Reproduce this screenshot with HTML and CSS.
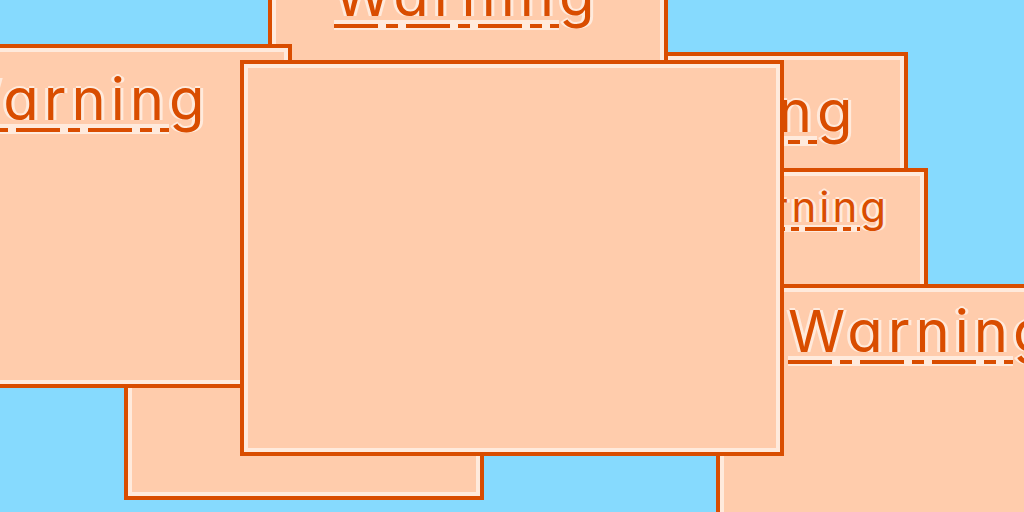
FILE: index.html
```html
<!DOCTYPE html>
<html lang="en">
<head>
<meta charset="utf-8">
<title>Warning</title>
<link rel="stylesheet" href="styles.css">
</head>
<body>
<div class="desk">
  <div class="win w-bottom"></div>
  <div class="win w-rt"><div class="title"><span class="ul">Warnin</span>g</div></div>
  <div class="win w-rm"><div class="title small"><span class="ul">Warnin</span>g</div></div>
  <div class="win w-br"><div class="title"><span class="ul">Warnin</span>g</div></div>
  <div class="win w-top"><div class="title"><span class="ul">Warnin</span>g</div></div>
  <div class="win w-left"><div class="title"><span class="ul">Warnin</span>g</div></div>
  <div class="win w-center"></div>
</div>
</body>
</html>
```
FILE: styles.css
```css
html, body {
  margin: 0;
  padding: 0;
}
body {
  width: 1024px;
  height: 512px;
  overflow: hidden;
  background: #86dafe;
  font-family: Inter, "DejaVu Sans", sans-serif;
}
.desk {
  position: relative;
  width: 1024px;
  height: 512px;
  overflow: hidden;
}
.win {
  position: absolute;
  box-sizing: border-box;
  background: #ffccac;
  border: 4px solid #d94d00;
  box-shadow: inset 0 0 0 4px #ffeadc;
}
.title {
  font-size: 58px;
  line-height: 1;
  font-weight: 400;
  letter-spacing: 5px;
  color: #d94d00;
  white-space: nowrap;
  font-feature-settings: "cv11" 1, "ss02" 1;
  text-shadow: 3px 0 0 #ffeadc, -3px 0 0 #ffeadc, 0 -2px 0 #ffeadc;
}
.title.small {
  font-size: 42px;
  letter-spacing: 3px;
}
.ul {
  background-image:
    repeating-linear-gradient(90deg, #d94d00 0 44px, #ffeadc 44px 52px, #d94d00 52px 64px, #ffeadc 64px 72px),
    linear-gradient(#ffeadc, #ffeadc);
  background-repeat: no-repeat;
  background-size: 100% 4px, 100% 12px;
  background-position: 0 calc(0.969em + 8px), 0 calc(0.969em + 4px);
}
.small .ul {
  background-image:
    repeating-linear-gradient(90deg, #d94d00 0 32px, #ffeadc 32px 38px, #d94d00 38px 46px, #ffeadc 46px 52px),
    linear-gradient(#ffeadc, #ffeadc);
  background-size: 100% 4px, 100% 8px;
  background-position: 0 calc(0.969em + 5px), 0 calc(0.969em + 3px);
}
.w-top {
  left: 268px;
  top: -60px;
  width: 400px;
  height: 140px;
  padding: 22px 0 0 62px;
}
.w-left {
  left: -120px;
  top: 44px;
  width: 412px;
  height: 344px;
  padding: 22px 0 0 60px;
}
.w-bottom {
  left: 124px;
  top: 300px;
  width: 360px;
  height: 200px;
}
.w-rt {
  left: 528px;
  top: 52px;
  width: 380px;
  height: 200px;
  padding: 26px 0 0 60px;
}
.w-rm {
  left: 641px;
  top: 168px;
  width: 287px;
  height: 160px;
  padding: 14px 0 0 56px;
}
.w-br {
  left: 716px;
  top: 284px;
  width: 400px;
  height: 300px;
  padding: 14px 0 0 68px;
}
.w-center {
  left: 240px;
  top: 60px;
  width: 544px;
  height: 396px;
}
```
